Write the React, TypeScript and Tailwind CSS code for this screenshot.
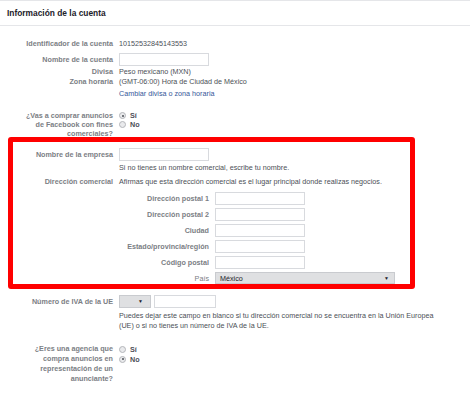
import React from 'react';

const LABEL = 'text-right font-bold text-[#7b7e84]';

const Radio = ({ checked }: { checked?: boolean }) => (
  <span className="relative inline-block h-[7px] w-[7px] shrink-0 rounded-full border border-[#b4b6ba] bg-[#e9eaec]">
    {checked ? (
      <span className="absolute left-[1.5px] top-[1.5px] h-[2px] w-[2px] rounded-full bg-[#4b4f56]" />
    ) : null}
  </span>
);

const TextBox = ({ className }: { className?: string }) => (
  <div className={`h-[13px] border border-[#d8dade] bg-white ${className ?? ''}`} />
);

const SubRow = ({ label, children }: { label: string; children: React.ReactNode }) => (
  <div className="flex h-[13px] items-center">
    <div className={`${LABEL} w-[90px]`}>{label}</div>
    <div className="ml-[6px]">{children}</div>
  </div>
);

export default function App() {
  return (
    <div
      className="h-[401px] w-[470px] overflow-hidden bg-white text-[7.2px] leading-[9px] text-[#4b4f56]"
      style={{ fontFamily: '"Liberation Sans", Arial, sans-serif' }}
    >
      {/* header */}
      <div className="flex h-[26px] items-center border-y border-[#e5e6e9] px-[7px]">
        <span className="text-[8.4px] font-bold text-[#1d2129]">Información de la cuenta</span>
      </div>

      {/* account info */}
      <div className="mt-[13px] flex flex-col">
        <div className="flex h-[9px] items-center">
          <div className={`${LABEL} w-[113px]`}>Identificador de la cuenta</div>
          <div className="ml-[6px]">10152532845143553</div>
        </div>
        <div className="mt-[5px] flex h-[13px] items-center">
          <div className={`${LABEL} w-[113px]`}>Nombre de la cuenta</div>
          <TextBox className="ml-[6px] w-[90px]" />
        </div>
        <div className="mt-[1px] flex h-[9px] items-center">
          <div className={`${LABEL} w-[113px]`}>Divisa</div>
          <div className="ml-[6px]">Peso mexicano (MXN)</div>
        </div>
        <div className="mt-[1px] flex h-[9px] items-center">
          <div className={`${LABEL} w-[113px]`}>Zona horaria</div>
          <div className="ml-[6px]">(GMT-06:00) Hora de Ciudad de México</div>
        </div>
        <div className="mt-[3px] flex h-[9px] items-center">
          <div className="w-[113px]" />
          <div className="ml-[6px] text-[#365899]">Cambiar divisa o zona horaria</div>
        </div>

        <div className="mt-[13px] flex">
          <div className={`${LABEL} w-[113px] leading-[9px]`}>
            ¿Vas a comprar anuncios
            <br />
            de Facebook con fines
            <br />
            comerciales?
          </div>
          <div className="ml-[6px] flex flex-col">
            <label className="flex h-[9px] items-center gap-[4px] font-bold">
              <Radio checked />
              Sí
            </label>
            <label className="flex h-[9px] items-center gap-[4px] font-bold">
              <Radio />
              No
            </label>
          </div>
        </div>
      </div>

      {/* highlighted business block */}
      <div className="ml-[8px] mt-[-1px] w-[407px] rounded-[3px] border-[5px] border-[#ff0000]">
        <div className="mt-[6px] flex h-[13px] items-center">
          <div className={`${LABEL} w-[100px]`}>Nombre de la empresa</div>
          <TextBox className="ml-[6px] w-[90px]" />
        </div>
        <div className="mt-[1px] flex h-[10px] items-center">
          <div className="w-[100px]" />
          <div className="ml-[6px]">Si no tienes un nombre comercial, escribe tu nombre.</div>
        </div>
        <div className="mt-[5px] flex h-[9px] items-center">
          <div className={`${LABEL} w-[100px]`}>Dirección comercial</div>
          <div className="ml-[6px] whitespace-nowrap">
            Afirmas que esta dirección comercial es el lugar principal donde realizas negocios.
          </div>
        </div>
        <div className="ml-[106px] mt-[6px] flex flex-col gap-[3px]">
          <SubRow label="Dirección postal 1">
            <TextBox className="w-[90px]" />
          </SubRow>
          <SubRow label="Dirección postal 2">
            <TextBox className="w-[90px]" />
          </SubRow>
          <SubRow label="Ciudad">
            <TextBox className="w-[90px]" />
          </SubRow>
          <SubRow label="Estado/provincia/región">
            <TextBox className="w-[90px]" />
          </SubRow>
          <SubRow label="Código postal">
            <TextBox className="w-[90px]" />
          </SubRow>
          <div className="flex h-[12px] items-center">
            <div className="w-[90px] text-right text-[#7b7e84]">País</div>
            <div className="ml-[6px] flex h-[12px] w-[180px] items-center justify-between border border-[#c9cbcf] bg-[#dfe0e2] pl-[4px] pr-[5px] text-[#1d2129]">
              <span>México</span>
              <span className="text-[5px] leading-none">▼</span>
            </div>
          </div>
        </div>
      </div>

      {/* VAT */}
      <div className="mt-[6px] flex h-[13px] items-center">
        <div className={`${LABEL} w-[113px]`}>Número de IVA de la UE</div>
        <div className="ml-[6px] flex h-[13px] w-[32px] items-center justify-end border border-[#c9cbcf] bg-[#dfe0e2] pr-[7px] text-[#1d2129]">
          <span className="text-[5px] leading-none">▼</span>
        </div>
        <TextBox className="ml-[3px] w-[62px]" />
      </div>
      <div className="mt-[3px] flex">
        <div className="w-[113px]" />
        <div className="ml-[6px] whitespace-nowrap leading-[10px]">
          Puedes dejar este campo en blanco si tu dirección comercial no se encuentra en la Unión Europea
          <br />
          (UE) o si no tienes un número de IVA de la UE.
        </div>
      </div>

      {/* agency */}
      <div className="mt-[13px] flex">
        <div className={`${LABEL} w-[113px] leading-[10px]`}>
          ¿Eres una agencia que
          <br />
          compra anuncios en
          <br />
          representación de un
          <br />
          anunciante?
        </div>
        <div className="ml-[6px] flex flex-col">
          <label className="flex h-[10px] items-center gap-[4px] font-bold">
            <Radio />
            Sí
          </label>
          <label className="flex h-[10px] items-center gap-[4px] font-bold">
            <Radio checked />
            No
          </label>
        </div>
      </div>
    </div>
  );
}
